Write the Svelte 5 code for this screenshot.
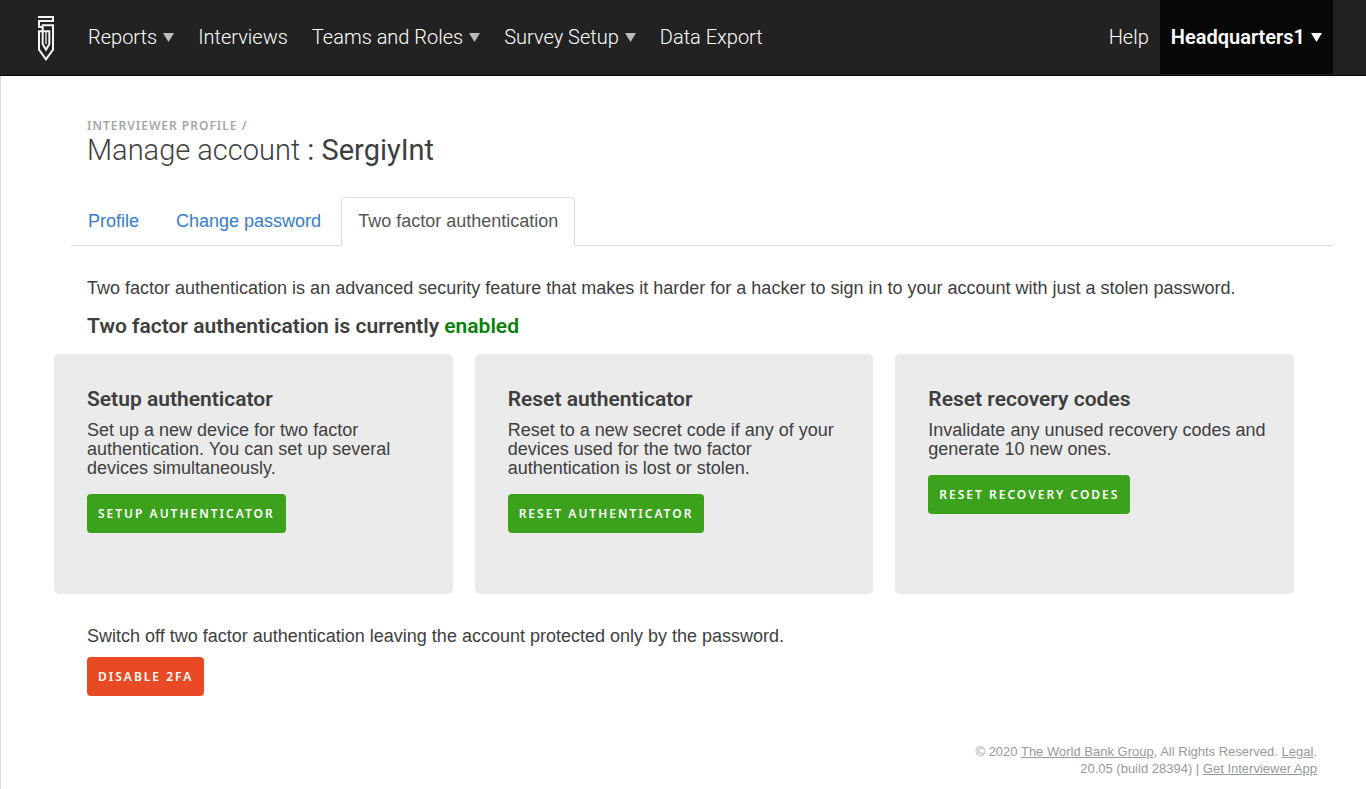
<script>
  const menu = [
    { label: 'Reports', drop: true },
    { label: 'Interviews', drop: false },
    { label: 'Teams and Roles', drop: true },
    { label: 'Survey Setup', drop: true },
    { label: 'Data Export', drop: false }
  ];
  const cards = [
    {
      title: 'Setup authenticator',
      text: 'Set up a new device for two factor authentication. You can set up several devices simultaneously.',
      action: 'Setup authenticator'
    },
    {
      title: 'Reset authenticator',
      text: 'Reset to a new secret code if any of your devices used for the two factor authentication is lost or stolen.',
      action: 'Reset authenticator'
    },
    {
      title: 'Reset recovery codes',
      text: 'Invalidate any unused recovery codes and generate 10 new ones.',
      action: 'Reset recovery codes'
    }
  ];
</script>

{#snippet caret()}
  <svg class="caret" viewBox="0 0 11 9" aria-hidden="true"><path d="M0 0h11L5.500 9z" fill="currentColor" /></svg>
{/snippet}

<header>
  <a class="logo" href="#home" aria-label="Home">
    <svg viewBox="0 0 48 135" fill="none" stroke="#f4f4f2" stroke-width="6" aria-hidden="true">
      <path d="M0 3H45V15H3V33H14V28H45V101L24 130L3 101V46H34V84L24 101L14 84V28" />
      <path d="M24 46V84" stroke-width="4" />
    </svg>
  </a>
  <nav>
    {#each menu as item}
      <a href="#menu">{item.label}{#if item.drop}{@render caret()}{/if}</a>
    {/each}
  </nav>
  <a class="help" href="#help">Help</a>
  <button class="user" type="button">Headquarters1{@render caret()}</button>
</header>

<main>
  <div class="title">
    <a class="crumb" href="#profile">Interviewer profile /</a>
    <h1>Manage account <b>: SergiyInt</b></h1>
  </div>

  <nav class="tabs">
    <a href="#profile">Profile</a>
    <a href="#password">Change password</a>
    <a class="active" href="#twofactor" aria-current="page">Two factor authentication</a>
  </nav>

  <section class="intro">
    <p>Two factor authentication is an advanced security feature that makes it harder for a hacker to sign in to your account with just a stolen password.</p>
    <h2>Two factor authentication is currently <span>enabled</span></h2>
  </section>

  <div class="cards">
    {#each cards as card}
      <section class="card">
        <h2>{card.title}</h2>
        <p>{card.text}</p>
        <button class="btn" type="button">{card.action}</button>
      </section>
    {/each}
  </div>

  <section class="off">
    <p>Switch off two factor authentication leaving the account protected only by the password.</p>
    <button class="btn danger" type="button">Disable 2FA</button>
  </section>

  <footer>
    <div>© 2020 <a href="#bank">The World Bank Group</a>, All Rights Reserved. <a href="#legal">Legal</a>.</div>
    <div>20.05 (build 28394) | <a href="#app">Get Interviewer App</a></div>
  </footer>
</main>

<style>
  :global(body) {
    margin: 0;
    background: #fff;
    color: #3e3e3e;
    font: 18px/19px "Liberation Sans", Arial, sans-serif;
  }
  :global(#app) { min-height: 100vh; display: flex; flex-direction: column; }
  a { text-decoration: none; }
  h1, h2, p { margin: 0; }

  header {
    display: flex;
    height: 75px;
    padding-right: 33px;
    background: #222;
    border-bottom: 1px solid #000;
    font: 300 20px/24px Roboto, sans-serif;
    color: #fff;
  }
  header a { color: #fff; }
  header > a, header nav a { display: flex; align-items: center; height: 74px; }
  .logo { padding: 0 34px 0 38px; }
  .logo svg { width: 16px; height: 45px; margin-top: 3px; }
  header nav { display: flex; flex: 1; gap: 24px; }
  .caret { width: 11px; height: 9px; margin-left: 6px; color: #bbb; }
  .help { padding: 0 11px; }
  .user {
    display: flex;
    align-items: center;
    height: 74px;
    padding: 0 11px;
    border: 0;
    background: #080808;
    color: #fff;
    font: 600 20px/24px Roboto, sans-serif;
  }
  .user .caret { color: #fff; }

  main {
    flex: 1;
    padding: 42px 33px 12px 53px;
    border-left: 1px solid #d8dce0;
  }
  .title, .intro, .off { padding: 0 33px; }
  .crumb {
    display: block;
    font: 600 12px/15px "Noto Sans", sans-serif;
    letter-spacing: 1px;
    text-transform: uppercase;
    color: #a5a8a8;
  }
  h1 { font: 300 29px/34px Roboto, sans-serif; }
  h1 b { font-weight: 400; }

  .tabs {
    display: flex;
    gap: 3px;
    margin: 30px 0 33px 17px;
    border-bottom: 1px solid #ddd;
  }
  .tabs a {
    padding: 14px 16px;
    margin-bottom: -1px;
    border: 1px solid transparent;
    border-radius: 4px 4px 0 0;
    color: #337ecb;
  }
  .tabs .active {
    color: #555;
    background: #fff;
    border-color: #ddd #ddd #fff;
  }

  h2 { font: 600 21px/24px Roboto, sans-serif; }
  .intro h2 { margin: 16px 0; }
  .intro span { color: #0a800a; }

  .cards {
    display: grid;
    grid-template-columns: repeat(3, 1fr);
    gap: 22px;
    margin-right: 39px;
  }
  .card {
    min-height: 174px;
    padding: 33px 24px 33px 33px;
    border-radius: 5px;
    background: #ebebeb;
  }
  .card p { margin: 10px 0 16px; }
  .btn {
    height: 39px;
    padding: 0 11px;
    border: 0;
    border-radius: 4px;
    background: #3ca21b;
    color: #fff;
    font: 600 12px/15px "Noto Sans", sans-serif;
    letter-spacing: 2px;
    text-transform: uppercase;
  }
  .off { padding-top: 33px; }
  .btn.danger { margin-top: 11px; background: #e74a25; }

  footer {
    margin: 47px 16px 0 0;
    font: 13px/17px "Liberation Sans", Arial, sans-serif;
    text-align: right;
    color: #999;
  }
  footer a { color: #999; text-decoration: underline; }
</style>
